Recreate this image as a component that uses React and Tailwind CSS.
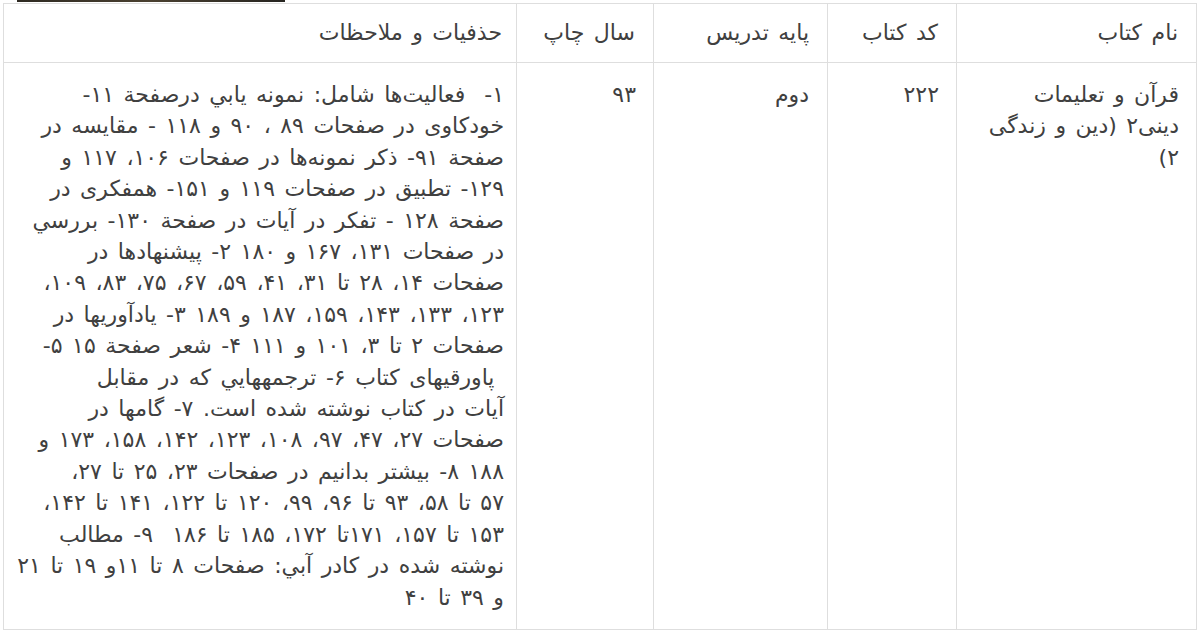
const headers = ['نام کتاب', 'کد کتاب', 'پایه تدریس', 'سال چاپ', 'حذفیات و ملاحظات'];

const nameLines = ['قرآن و تعلیمات', 'دینی۲ (دین و زندگی', '۲)'];

const notes = [
  '۱-  فعالیت‌ها شامل: نمونه یابي درصفحة ۱۱-',
  'خودکاوی در صفحات ۸۹ ، ۹۰ و ۱۱۸ - مقایسه در',
  'صفحة ۹۱- ذکر نمونه‌ها در صفحات ۱۰۶، ۱۱۷ و',
  '۱۲۹- تطبیق در صفحات ۱۱۹ و ۱۵۱- همفکری در',
  'صفحة ۱۲۸ - تفکر در آیات در صفحة ۱۳۰- بررسي',
  'در صفحات ۱۳۱، ۱۶۷ و ۱۸۰ ۲- پیشنهادها در',
  'صفحات ۱۴، ۲۸ تا ۳۱، ۴۱، ۵۹، ۶۷، ۷۵، ۸۳، ۱۰۹،',
  '۱۲۳، ۱۳۳، ۱۴۳، ۱۵۹، ۱۸۷ و ۱۸۹ ۳- یادآوریها در',
  'صفحات ۲ تا ۳، ۱۰۱ و ۱۱۱ ۴- شعر صفحة ۱۵ ۵-',
  ' پاورقیهای کتاب ۶- ترجمههایي که در مقابل',
  'آیات در کتاب نوشته شده است. ۷- گامها در',
  'صفحات ۲۷، ۴۷، ۹۷، ۱۰۸، ۱۲۳، ۱۴۲، ۱۵۸، ۱۷۳ و',
  '۱۸۸ ۸- بیشتر بدانیم در صفحات ۲۳، ۲۵ تا ۲۷،',
  '۵۷ تا ۵۸، ۹۳ تا ۹۶، ۹۹، ۱۲۰ تا ۱۲۲، ۱۴۱ تا ۱۴۲،',
  '۱۵۳ تا ۱۵۷، ۱۷۱تا ۱۷۲، ۱۸۵ تا ۱۸۶  ۹- مطالب',
  'نوشته شده در کادر آبي: صفحات ۸ تا ۱۱و ۱۹ تا ۲۱',
  'و ۳۹ تا ۴۰',
];

const Lines = ({ lines }) => (
  <div>
    {lines.map((l, i) => (
      <div key={i} className="whitespace-pre">
        {l}
      </div>
    ))}
  </div>
);

export default function App() {
  return (
    <div
      className="min-h-[635px] bg-white text-[#404040] text-[22px] leading-[31.4px] [word-spacing:2.5px]"
      style={{ fontFamily: '"DejaVu Sans", sans-serif' }}
    >
      {/* bottom edge of a picture above the table */}
      <div className="ml-[17px] w-[268px] h-[2px] bg-gradient-to-r from-[#2e2a22] via-[#4a4030] to-[#262420]" />
      <div
        dir="rtl"
        className="mx-[3px] mt-[1px] grid grid-cols-[240px_129px_174px_137px_1fr] border border-[#dedede]"
      >
        {headers.map((h, i) => (
          <div
            key={h}
            className={`h-[59px] flex items-center border-b border-[#dedede] ${
              i < 4 ? 'border-l pr-[18px]' : 'pr-[14px]'
            }`}
          >
            {h}
          </div>
        ))}
        <div className="border-l border-[#dedede] pr-[17px] pt-[16px] pb-[16px]">
          <Lines lines={nameLines} />
        </div>
        <div className="border-l border-[#dedede] pr-[17px] pt-[16px]">۲۲۲</div>
        <div className="border-l border-[#dedede] pr-[18px] pt-[16px]">دوم</div>
        <div className="border-l border-[#dedede] pr-[17px] pt-[16px]">۹۳</div>
        <div className="pr-[12px] pt-[16px] pb-[16px]">
          <Lines lines={notes} />
        </div>
      </div>
    </div>
  );
}
